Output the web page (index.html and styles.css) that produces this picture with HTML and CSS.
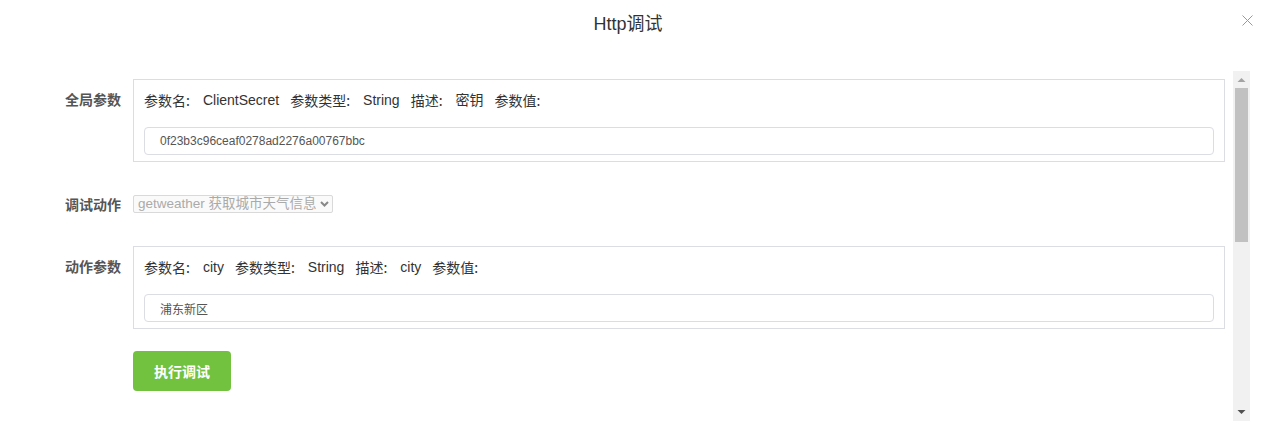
FILE: index.html
```html
<!DOCTYPE html>
<html lang="zh-CN">
<head>
<meta charset="utf-8">
<title>Http调试</title>
<link rel="stylesheet" href="styles.css">
</head>
<body>
<div class="dialog">
  <header class="dialog-header">
    <h1 class="dialog-title">Http调试</h1>
    <button class="dialog-close" type="button" aria-label="关闭">
      <svg width="11" height="11" viewBox="0 0 11 11"><path d="M0.5 0.5 L10.5 10.5 M10.5 0.5 L0.5 10.5" stroke="#999" stroke-width="1" fill="none"/></svg>
    </button>
  </header>
  <div class="dialog-main">
    <div class="dialog-body">
      <div class="form-row">
        <div class="form-label">全局参数</div>
        <div class="param-box">
          <div class="param-meta">
            <span class="meta-key">参数名:</span><span class="meta-val">ClientSecret</span>
            <span class="meta-key">参数类型:</span><span class="meta-val">String</span>
            <span class="meta-key">描述:</span><span class="meta-val">密钥</span>
            <span class="meta-key">参数值:</span>
          </div>
          <input class="param-input" type="text" value="0f23b3c96ceaf0278ad2276a00767bbc">
        </div>
      </div>
      <div class="form-row row-action">
        <div class="form-label label-inline">调试动作</div>
        <div class="select-wrap">
          <select class="action-select" disabled>
            <option>getweather 获取城市天气信息</option>
          </select>
          <svg class="select-arrow" width="9" height="6" viewBox="0 0 9 6"><path d="M1 1 L4.5 4.5 L8 1" stroke="#888" stroke-width="2" fill="none"/></svg>
        </div>
      </div>
      <div class="form-row row-params">
        <div class="form-label">动作参数</div>
        <div class="param-box">
          <div class="param-meta">
            <span class="meta-key">参数名:</span><span class="meta-val">city</span>
            <span class="meta-key">参数类型:</span><span class="meta-val">String</span>
            <span class="meta-key">描述:</span><span class="meta-val">city</span>
            <span class="meta-key">参数值:</span>
          </div>
          <input class="param-input" type="text" value="浦东新区">
        </div>
      </div>
      <div class="form-row row-button">
        <div class="form-label"></div>
        <button class="run-button" type="button">执行调试</button>
      </div>
    </div>
    <div class="scrollbar" aria-hidden="true">
      <div class="sb-btn">
        <svg width="17" height="17" viewBox="0 0 17 17"><path d="M4.5 11 L8.5 7 L12.5 11 Z" fill="#a3a3a3"/></svg>
      </div>
      <div class="sb-track"><div class="sb-thumb"></div></div>
      <div class="sb-btn">
        <svg width="17" height="17" viewBox="0 0 17 17"><path d="M4.5 6 L12.5 6 L8.5 10 Z" fill="#505050"/></svg>
      </div>
    </div>
  </div>
</div>
</body>
</html>
```

FILE: styles.css
```css
* { box-sizing: border-box; }
html, body { margin: 0; padding: 0; background: #fff; }
body {
  font-family: "Liberation Sans", Arial, "Noto Sans CJK SC", sans-serif;
  font-size: 14px;
  color: #333;
}
.dialog {
  width: 1263px;
  height: 442px;
  position: relative;
  background: #fff;
}
.dialog-header {
  height: 71px;
  padding-top: 12px;
}
.dialog-title {
  margin: 0;
  font-size: 18px;
  font-weight: normal;
  line-height: 24px;
  text-align: center;
  color: #333;
  padding-right: 7px;
}
.dialog-close {
  position: absolute;
  top: 15px;
  left: 1242px;
  width: 11px;
  height: 11px;
  padding: 0;
  border: 0;
  background: transparent;
  display: block;
  cursor: pointer;
}
.dialog-close svg { display: block; }
.dialog-main {
  display: flex;
  width: 1250px;
  height: 350px;
}
.dialog-body {
  flex: 1;
  overflow: hidden;
  padding-top: 8px;
}
.scrollbar {
  flex: 0 0 17px;
  display: flex;
  flex-direction: column;
  background: #f1f1f1;
}
.sb-btn { height: 17px; flex: 0 0 17px; }
.sb-btn svg { display: block; }
.sb-track { flex: 1; padding: 0 2px; }
.sb-thumb { height: 154px; background: #c1c1c1; }
.form-row {
  display: flex;
  align-items: flex-start;
  padding-right: 8px;
}
.form-label {
  flex: 0 0 133px;
  padding-right: 12px;
  padding-top: 9px;
  text-align: right;
  font-weight: bold;
  font-size: 14px;
  color: #555;
  line-height: 22px;
  font-family: "Noto Sans CJK SC", sans-serif;
}
.label-inline { padding-top: 0; line-height: 18px; }
.param-box {
  flex: 1;
  border: 1px solid #dcdce4;
  padding: 9px 10px 6px;
}
.param-meta {
  display: flex;
  line-height: 22px;
  height: 22px;
  margin-bottom: 16px;
  white-space: nowrap;
  color: #333;
}
.meta-key { font-family: "Noto Sans CJK SC", sans-serif; font-size: 14px; }
.meta-val { margin: 0 11px 0 13px; }
.param-input {
  display: block;
  width: 100%;
  height: 28px;
  border: 1px solid #dcdce4;
  border-radius: 4px;
  padding: 0 15px;
  font-family: "Liberation Sans", Arial, "Noto Sans CJK SC", sans-serif;
  font-size: 12px;
  color: #555;
  outline: none;
  background: #fff;
}
.row-action { margin-top: 33px; }
.select-wrap { position: relative; width: 200px; height: 18px; }
.action-select {
  appearance: none;
  -webkit-appearance: none;
  display: block;
  width: 200px;
  height: 18px;
  border: 1px solid #d9d9d9;
  border-radius: 2px;
  background: #fafafa;
  color: #aaa;
  font-family: "Liberation Sans", Arial, "Noto Sans CJK SC", sans-serif;
  font-size: 13.5px;
  padding: 0 0 0 4px;
  line-height: 16px;
  opacity: 1;
}
.select-arrow {
  position: absolute;
  right: 4px;
  top: 6px;
}
.row-params { margin-top: 33px; }
.row-button { margin-top: 22px; }
.run-button {
  width: 98px;
  height: 40px;
  border: 0;
  border-radius: 4px;
  background: #72c23f;
  color: #fff;
  font-family: "Noto Sans CJK SC", sans-serif;
  font-size: 14px;
  font-weight: bold;
  cursor: pointer;
}
```
